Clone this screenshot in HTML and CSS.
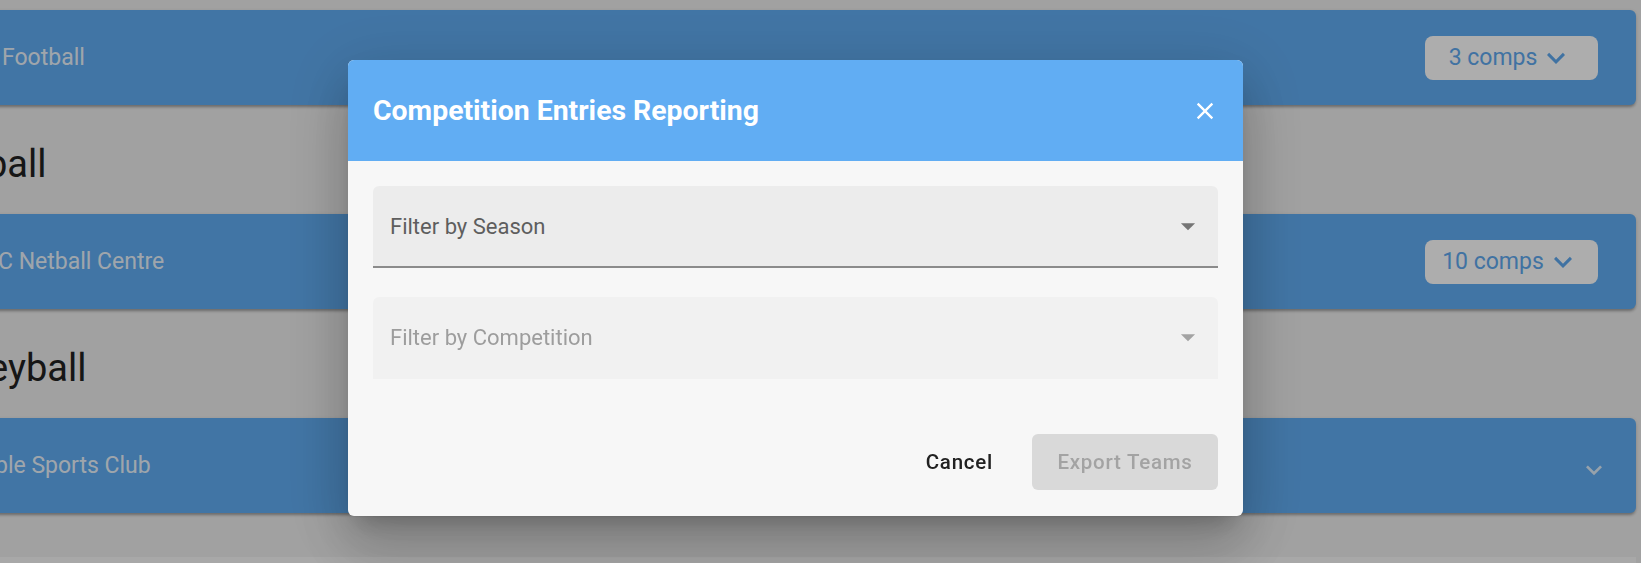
FILE: index.html
```html
<!DOCTYPE html>
<html lang="en">
<head>
<meta charset="utf-8">
<title>Competition Entries Reporting</title>
<link rel="stylesheet" href="styles.css">
</head>
<body>
<main class="page">
  <div class="club-card">
    <span class="club-name">Football</span>
    <button class="comps-btn" type="button"><span>3 comps</span>
      <svg class="comps-chevron" viewBox="0 0 24 24"><path d="M7.41,8.58L12,13.17L16.59,8.58L18,10L12,16L6,10L7.41,8.58Z"/></svg>
    </button>
  </div>
  <h2 class="sport-title"><span class="trim-b">ball</span></h2>
  <div class="club-card">
    <span class="club-name trim-c">C Netball Centre</span>
    <button class="comps-btn" type="button"><span>10 comps</span>
      <svg class="comps-chevron" viewBox="0 0 24 24"><path d="M7.41,8.58L12,13.17L16.59,8.58L18,10L12,16L6,10L7.41,8.58Z"/></svg>
    </button>
  </div>
  <h2 class="sport-title"><span class="trim-e">eyball</span></h2>
  <div class="club-card">
    <span class="club-name trim-p">ble Sports Club</span>
    <svg class="card-chevron" viewBox="0 0 24 24"><path d="M7.41,8.58L12,13.17L16.59,8.58L18,10L12,16L6,10L7.41,8.58Z"/></svg>
  </div>
  <div class="next-band"></div>
</main>

<div class="scrim"></div>

<div class="dialog-layer">
  <section class="dialog" role="dialog" aria-labelledby="dlg-title">
    <header class="dialog-header">
      <h1 id="dlg-title" class="dialog-title">Competition Entries Reporting</h1>
      <svg class="close-icon" viewBox="0 0 24 24"><path d="M19,6.41L17.59,5L12,10.59L6.41,5L5,6.41L10.59,12L5,17.59L6.41,19L12,13.41L17.59,19L19,17.59L13.41,12L19,6.41Z"/></svg>
    </header>
    <div class="dialog-body">
      <div class="select-field">
        <span class="select-label">Filter by Season</span>
        <svg class="menu-down" viewBox="0 0 24 24"><path d="M7,10L12,15L17,10H7Z"/></svg>
      </div>
      <div class="select-field is-disabled">
        <span class="select-label">Filter by Competition</span>
        <svg class="menu-down" viewBox="0 0 24 24"><path d="M7,10L12,15L17,10H7Z"/></svg>
      </div>
    </div>
    <footer class="dialog-actions">
      <button class="text-btn" type="button">Cancel</button>
      <button class="export-btn" type="button" disabled>Export Teams</button>
    </footer>
  </section>
</div>
</body>
</html>
```

FILE: styles.css
```css
* { box-sizing: border-box; }

html, body {
  margin: 0;
  height: 100%;
}

body {
  background: #eeeeee;
  font-family: Roboto, "Liberation Sans", sans-serif;
  overflow: hidden;
}

.page {
  margin: 0 5px 0 -40px;
  padding-top: 10px;
}

.club-card {
  height: 95px;
  background: #61adf3;
  border-radius: 6px;
  box-shadow: 0 3px 3px -1px rgba(0,0,0,0.28), 0 1px 4px rgba(0,0,0,0.12);
  display: flex;
  align-items: center;
  justify-content: space-between;
  padding: 0 38px 0 42px;
}

.club-name {
  font-size: 23px;
  color: rgba(255,255,255,0.9);
  white-space: nowrap;
}

.trim-c { margin-left: -4px; }
.trim-p { margin-left: -7px; }

.comps-btn {
  width: 173px;
  height: 44px;
  border: 0;
  border-radius: 8px;
  background: #ffffff;
  color: #5fa9ef;
  font-family: inherit;
  font-size: 23px;
  display: flex;
  align-items: center;
  justify-content: center;
  padding: 0;
}

.comps-chevron {
  width: 36px;
  height: 36px;
  fill: #5fa9ef;
  margin-left: 1px;
}

.card-chevron {
  width: 32px;
  height: 32px;
  fill: rgba(255,255,255,0.8);
  margin-right: -12px;
  margin-top: 9px;
}

.sport-title {
  height: 109px;
  margin: 0;
  padding: 9px 0 0 40px;
  display: flex;
  align-items: center;
  font-size: 38px;
  font-weight: 400;
  color: #212121;
  white-space: nowrap;
}

.trim-b { margin-left: -14px; }
.trim-e { margin-left: -12px; }

.next-band {
  margin-top: 44px;
  height: 6px;
  background: #f8f8f8;
}

.scrim {
  position: fixed;
  inset: 0;
  background: rgba(0,0,0,0.32);
}

.dialog-layer {
  position: fixed;
  inset: 0;
  padding: 60px 0 0 348px;
}

.dialog {
  width: 895px;
  background: #f7f7f7;
  border-radius: 6px;
  overflow: hidden;
  box-shadow: 0 15px 21px -10px rgba(0,0,0,0.2), 0 34px 53px 4px rgba(0,0,0,0.14), 0 13px 64px 11px rgba(0,0,0,0.12);
}

.dialog-header {
  height: 101px;
  background: #61adf3;
  display: flex;
  align-items: center;
  justify-content: space-between;
  padding: 0 24px 0 25px;
}

.dialog-title {
  margin: 0;
  font-size: 28.4px;
  font-weight: 700;
  color: #ffffff;
}

.close-icon {
  width: 28px;
  height: 28px;
  fill: #ffffff;
}

.dialog-body {
  padding: 25px 25px 0;
  display: flex;
  flex-direction: column;
  gap: 29px;
}

.select-field {
  height: 82px;
  background: #ececec;
  border-radius: 6px 6px 0 0;
  border-bottom: 2px solid #8b8b8b;
  display: flex;
  align-items: center;
  justify-content: space-between;
  padding: 0 13px 0 17px;
}

.select-label {
  font-size: 22px;
  color: #5e5e5e;
}

.menu-down {
  width: 34px;
  height: 34px;
  fill: #757575;
}

.select-field.is-disabled {
  background: #f1f1f1;
  border-bottom-color: transparent;
}

.is-disabled .select-label { color: #9d9d9d; }
.is-disabled .menu-down { fill: #a3a3a3; }

.dialog-actions {
  display: flex;
  justify-content: flex-end;
  align-items: center;
  gap: 19px;
  padding: 55px 25px 26px;
}

.text-btn,
.export-btn {
  height: 56px;
  border: 0;
  border-radius: 6px;
  font-family: inherit;
  font-size: 20.5px;
  font-weight: 500;
  letter-spacing: 0.75px;
}

.text-btn {
  background: transparent;
  color: #212121;
  padding: 0 20px;
}

.export-btn {
  width: 186px;
  background: #d9d9d9;
  color: #a3a3a3;
  padding: 0;
}
```
